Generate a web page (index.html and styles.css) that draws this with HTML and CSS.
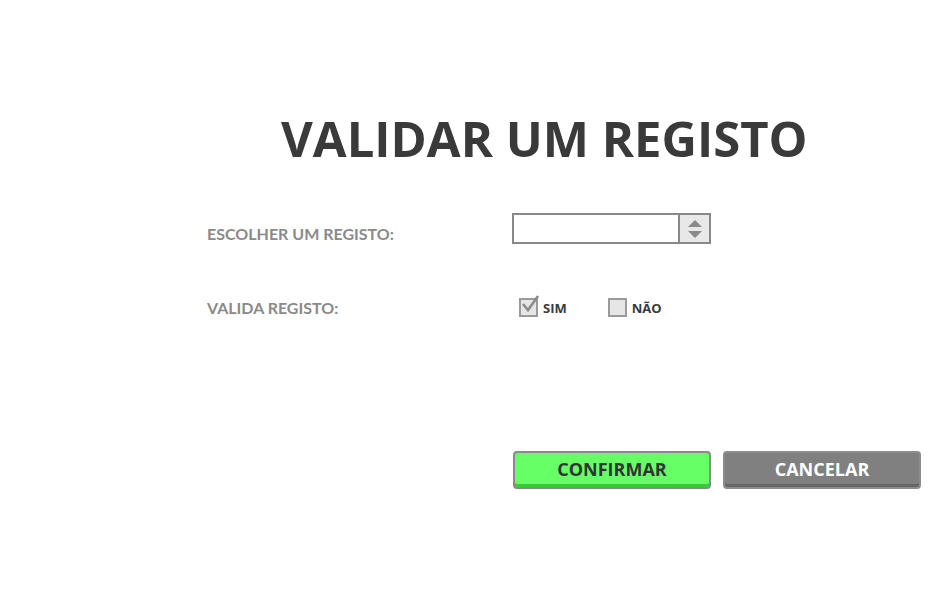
FILE: index.html
```html
<!DOCTYPE html>
<html lang="pt">
<head>
<meta charset="utf-8">
<link rel="stylesheet" href="styles.css">
</head>
<body>
<div class="page">
  <h1 class="title">VALIDAR UM REGISTO</h1>
  <div class="form">
    <div class="row row-select">
      <div class="label">ESCOLHER UM REGISTO:</div>
      <div class="control">
        <div class="spinbox">
          <div class="spin-field"></div>
          <div class="spin-btn">
            <svg width="16" height="20" viewBox="0 0 16 20"><path d="M1 8 L8 1 L15 8 Z" fill="#8a8a8a"/><path d="M1 12 L8 19 L15 12 Z" fill="#8a8a8a"/></svg>
          </div>
        </div>
      </div>
    </div>
    <div class="row row-check">
      <div class="label">VALIDA REGISTO:</div>
      <div class="control checks">
        <label class="check">
          <span class="box">
            <svg class="tick" width="22" height="22" viewBox="0 0 22 22"><path d="M4 9 L9 15 L19 1" fill="none" stroke="#8c8c8c" stroke-width="2.6"/></svg>
          </span>
          <span class="check-text">SIM</span>
        </label>
        <label class="check">
          <span class="box"></span>
          <span class="check-text">NÃO</span>
        </label>
      </div>
    </div>
  </div>
  <div class="actions">
    <button class="btn btn-confirm">CONFIRMAR</button>
    <button class="btn btn-cancel">CANCELAR</button>
  </div>
</div>
</body>
</html>
```

FILE: styles.css
```css
html, body {
  margin: 0;
  padding: 0;
  background: #fff;
}
.page {
  width: 942px;
  height: 600px;
  box-sizing: border-box;
  padding-top: 105px;
}
.title {
  margin: 0;
  padding-left: 281px;
  font-family: "Open Sans", sans-serif;
  font-weight: 700;
  font-size: 49px;
  line-height: 67px;
  color: #3a3a3a;
  white-space: nowrap;
}
.form {
  margin-top: 41px;
  padding-left: 207px;
  display: flex;
  flex-direction: column;
  gap: 53px;
}
.row {
  display: flex;
  align-items: center;
}
.label {
  width: 305px;
  font-family: "Lato", sans-serif;
  font-weight: 700;
  font-size: 16px;
  color: #8a8a8a;
}
.row-select .label {
  padding-top: 9px;
}
.spinbox {
  display: flex;
  width: 199px;
  height: 31px;
  box-sizing: border-box;
  border: 2px solid #888;
  background: #fff;
}
.spin-field {
  flex: 1;
}
.spin-btn {
  width: 29px;
  border-left: 2px solid #888;
  background: #e8e8e8;
  display: flex;
  align-items: center;
  justify-content: center;
}
.checks {
  display: flex;
  gap: 41px;
  padding-left: 7px;
}
.check {
  display: flex;
  align-items: center;
  gap: 5px;
}
.box {
  position: relative;
  width: 19px;
  height: 19px;
  box-sizing: border-box;
  border: 2px solid #9a9a9a;
  background: #e6e6e6;
}
.tick {
  position: absolute;
  left: -2px;
  top: -5px;
}
.check-text {
  font-family: "Open Sans", sans-serif;
  font-weight: 700;
  font-size: 13px;
  color: #3a3a3a;
  padding-top: 2px;
}
.actions {
  margin-top: 134px;
  padding-left: 513px;
  display: flex;
  gap: 12px;
}
.btn {
  width: 198px;
  height: 38px;
  box-sizing: border-box;
  border: 2px solid #8a8a8a;
  border-radius: 4px;
  font-family: "Open Sans", sans-serif;
  font-weight: 700;
  font-size: 18px;
  padding: 0 0 2px;
  cursor: pointer;
}
.btn-confirm {
  background: #66ff66;
  color: #333;
  box-shadow: inset 0 -3px 0 #33cc33;
}
.btn-cancel {
  background: #808080;
  color: #fff;
  border-color: #8c8c8c;
  box-shadow: inset 0 -3px 0 #666;
}
```
